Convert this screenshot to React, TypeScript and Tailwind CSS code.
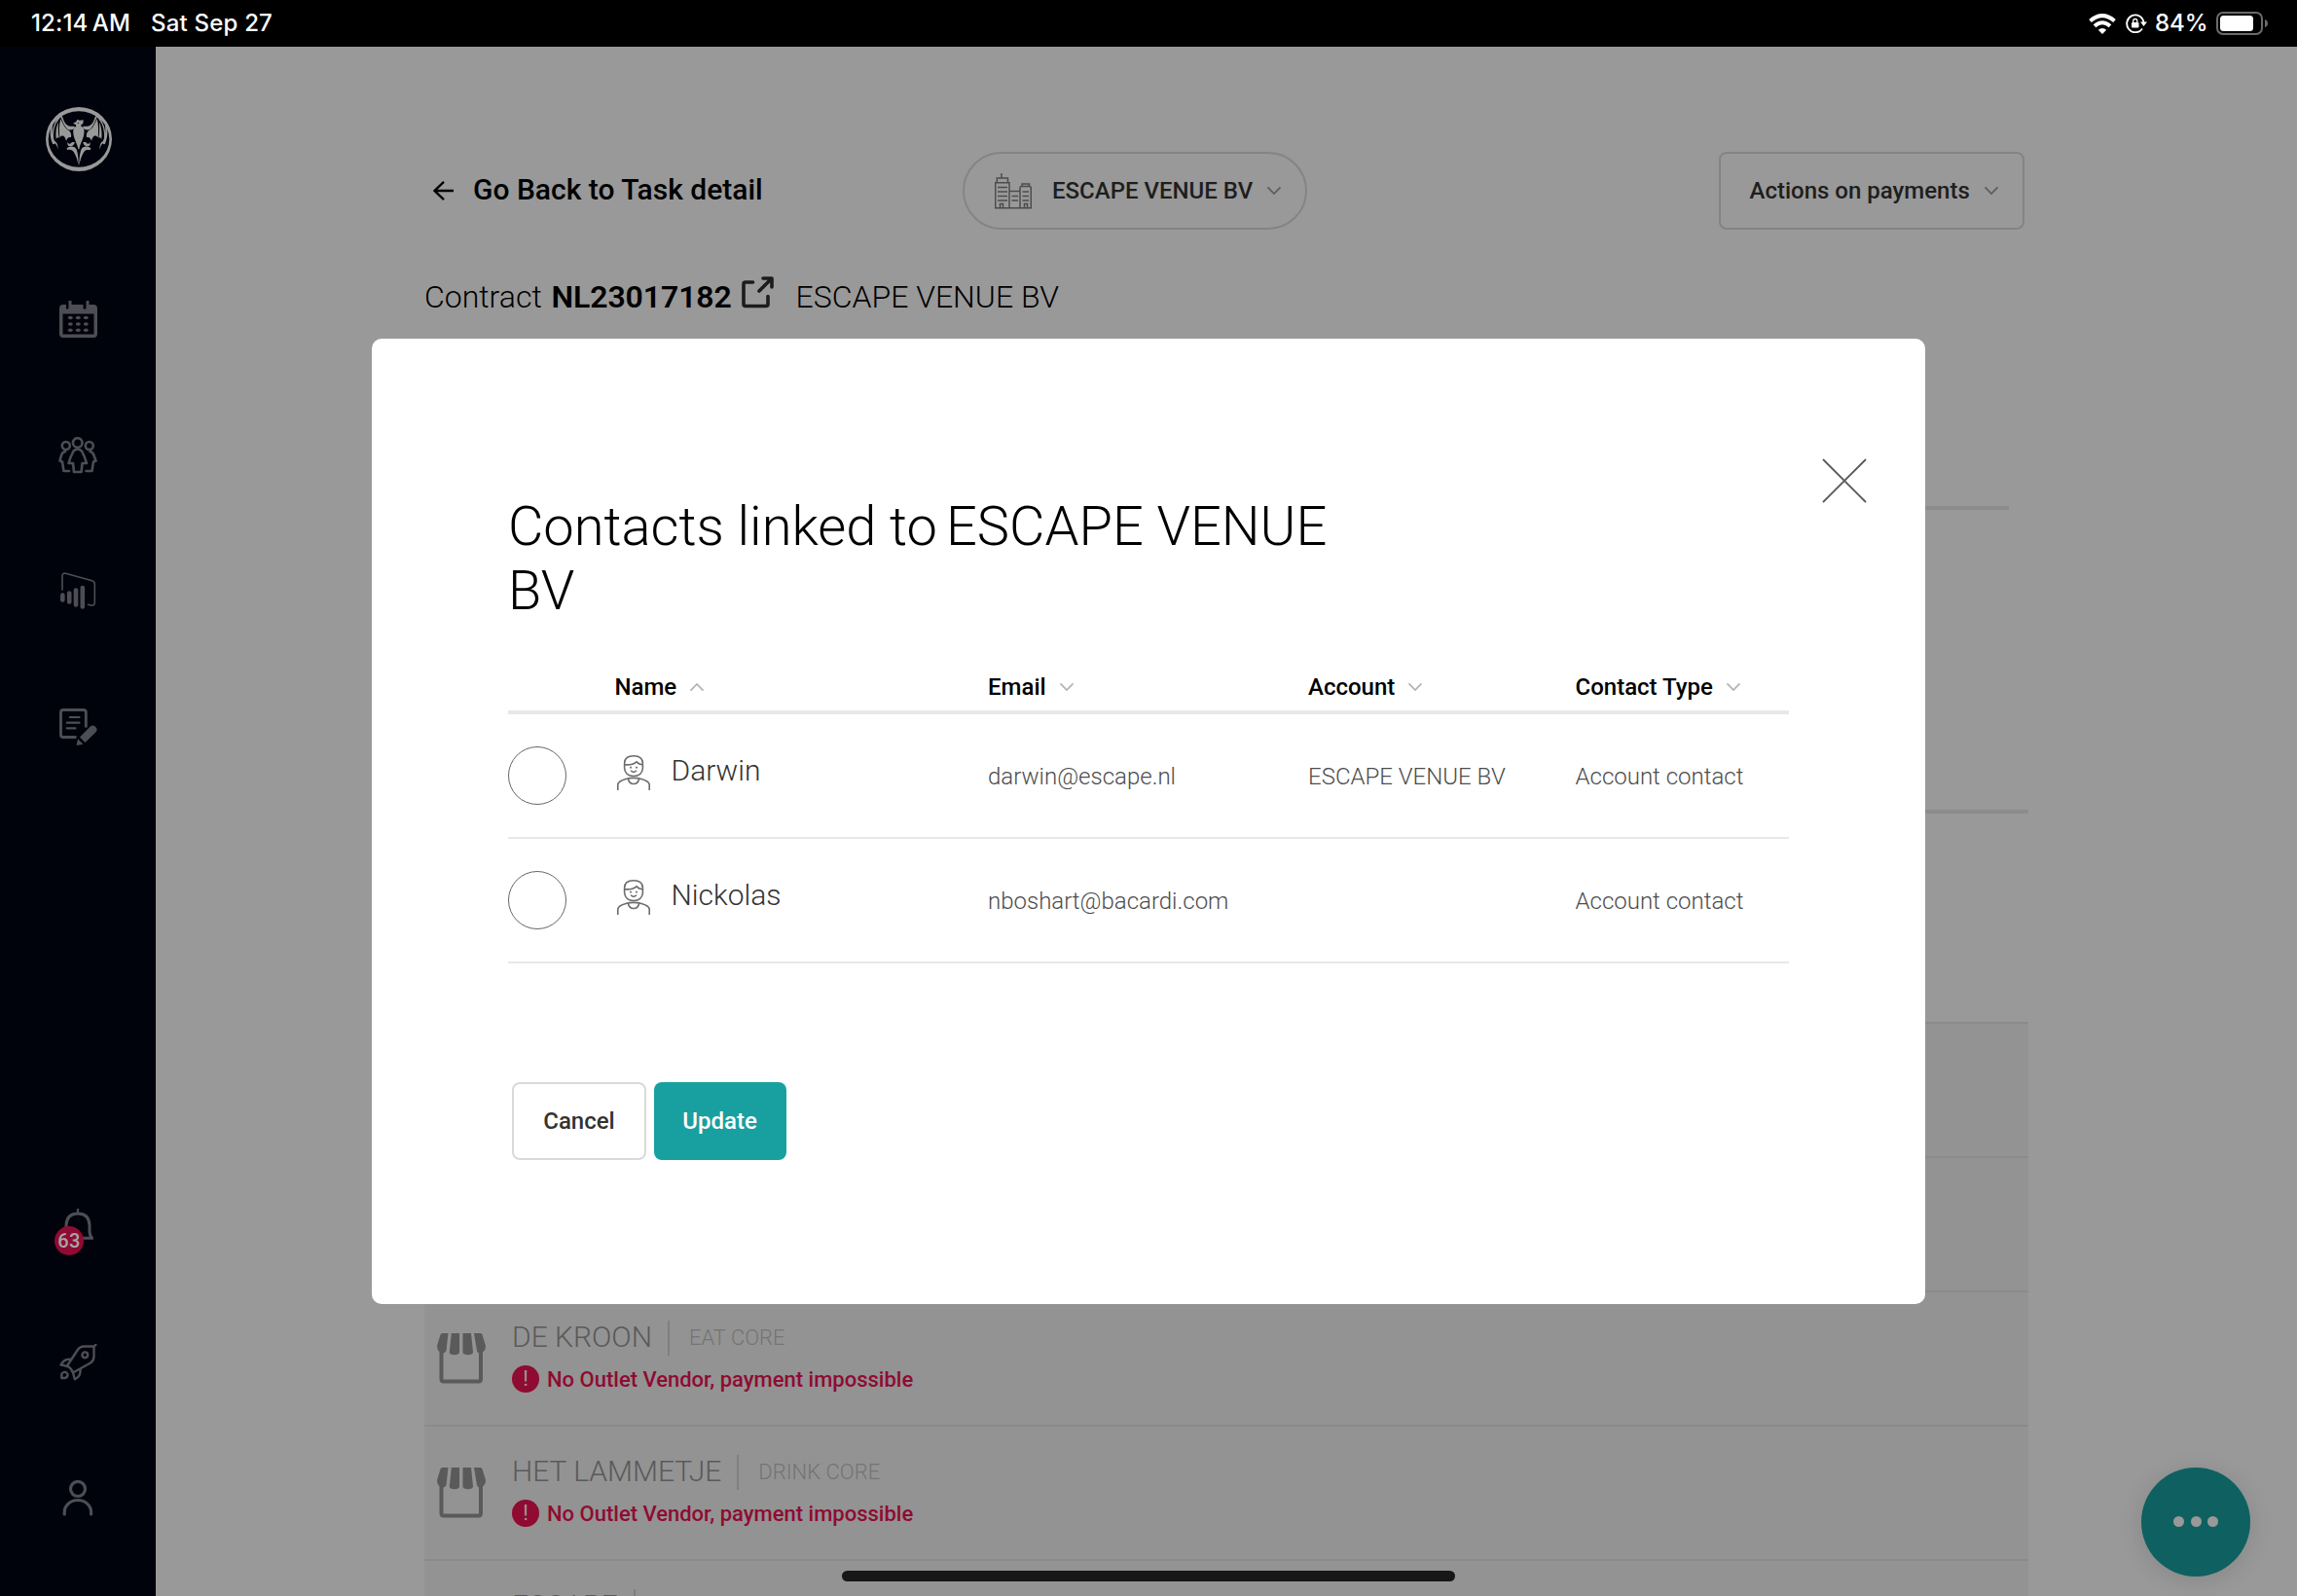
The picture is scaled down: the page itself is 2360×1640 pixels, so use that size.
import React from "react";

type IconProps = { className?: string };

function BatLogo() {
  const wing = (
    <>
      <path d="M184 356 C190 352 193 360 196 370 C203 388 212 391 229 389 L231 394 C224 402 216 402 208 398 C199 391 194 376 187 361 C180 370 171 380 167 398 C164 412 164 424 167 434 L164 436 C160 422 161 404 165 390 C170 375 177 365 184 356 Z" />
      <path d="M187 366 C182 384 182 404 184 424 C192 414 200 418 204 434 C208 424 214 422 219 424 C221 414 218 406 212 402 C200 396 194 382 187 366 Z" />
      <path d="M180 376 C173 392 171 408 173 430 C176 422 180 423 182 426 C179 408 179 392 180 376 Z" />
      <path d="M160 384 C153 398 153 420 161 440 C163 446 167 446 169 442 C175 446 177 454 178 461 C180 448 175 438 169 436 C164 430 159 410 162 386 Z" />
      <path d="M209 438 C212 446 217 444 222 438 L230 438 C230 446 224 452 214 451 C208 449 207 444 209 438 Z" />
      <path d="M206 457 C216 449 231 450 236 461 C240 472 242 488 242 511 C239 494 235 480 227 468 C221 459 214 463 207 461 Z" />
    </>
  );
  return (
    <svg viewBox="141 330 204 198" className="h-[66px] w-[68px]" fill="#999999">
      <path
        fillRule="evenodd"
        d="M141 429 a102 99 0 1 0 204 0 a102 99 0 1 0 -204 0 Z M149 429 a94 86 0 1 0 188 0 a94 86 0 1 0 -188 0 Z"
      />
      {wing}
      <g transform="translate(486 0) scale(-1 1)">{wing}</g>
      <path d="M225 380 L235 375 L238 368 L245 371 L257 370 L256 381 L250 385 L250 389 C258 392 261 400 259 412 C257 430 248 440 244 460 L241 460 C238 442 228 430 226 412 C224 400 228 392 235 389 L234 385 Z" />
      <circle cx="241" cy="379" r="2" fill="#00020c" />
    </svg>
  );
}

function CalendarIcon() {
  return (
    <svg viewBox="0 0 39 38" className="h-[38px] w-[39px]" fill="#4d4e55">
      <path
        fillRule="evenodd"
        d="M4 4 H7 V8 Q8 9.500 9.500 8 V0 H12.500 V4 H24.500 V8 Q26 9.500 27.500 8 V0 H30.500 V4 H35 Q39 4 39 8 V34 Q39 38 35 38 H4 Q0 38 0 34 V8 Q0 4 4 4 Z M3.500 13.500 V34.500 H35.500 V13.500 Z"
      />
      {[17.5, 24, 30.2].map((y) =>
        [11.3, 19.3, 27.3].map((x) => <ellipse key={`${x}-${y}`} cx={x} cy={y} rx="2.500" ry="1.800" />)
      )}
    </svg>
  );
}

function PeopleIcon() {
  return (
    <svg viewBox="0 0 40 38" className="h-[38px] w-[40px]" fill="none" stroke="#4d4e55" strokeWidth="2.600" strokeLinejoin="round" strokeLinecap="round">
      <circle cx="19.700" cy="6" r="4.800" />
      <circle cx="7.800" cy="9" r="4" />
      <circle cx="31.800" cy="9" r="4" />
      <path d="M15.500 14.500 Q19.700 10.500 24 14.500 Q27 20 29 27 H24.500 L23.500 36 H16 L15 27 H10.500 Q12.500 20 15.500 14.500 Z" />
      <path d="M7 15 Q4 15.500 3 19 L1.500 24.500 L4 25.500 L5.500 35 H11" />
      <path d="M32.500 15 Q35.500 15.500 36.500 19 L38.500 24.500 L36 25.500 L34.500 35 H28.500" />
    </svg>
  );
}

function ReportIcon() {
  return (
    <svg viewBox="0 0 37 38" className="h-[38px] w-[37px]" fill="none" stroke="#4d4e55" strokeLinecap="round">
      <path strokeWidth="1.600" d="M2 18 V4 Q2 0.500 5.500 1.300 L32 8.500 Q35.300 9.500 35.300 12 V31 Q35.300 34.800 31.500 34 L28.500 33.200" />
      <path strokeWidth="4.600" d="M2.300 23.500 V28.500 M9.200 21.500 V30.500 M16 18.500 V33.500 M22.800 16 V35.500" />
    </svg>
  );
}

function NoteIcon() {
  return (
    <svg viewBox="0 0 39 38" className="h-[38px] w-[39px]" fill="none" stroke="#4d4e55" strokeLinecap="round">
      <path strokeWidth="2.900" strokeLinecap="butt" d="M27.300 19.500 V4 Q27.300 1.500 24.800 1.500 H4 Q1.500 1.500 1.500 4 V27 Q1.500 29.500 4 29.500 H17.500" />
      <path strokeWidth="2.200" d="M10.800 9 H20.500 M7.800 14.700 H20.500 M7.800 20.300 H16.500" />
      <path stroke="none" fill="#4d4e55" d="M21 29.500 L31.500 18.800 Q34 16.300 37 18.800 Q40 21.500 37.500 24.200 L26.500 35 Z M19 31.300 L24.500 36.800 L17.500 38 Z" />
    </svg>
  );
}

function BellIcon() {
  return (
    <svg viewBox="0 0 40 48" className="h-[48px] w-[40px]" fill="none" stroke="#4d4e55" strokeWidth="3">
      <path d="M24 0 V5" strokeWidth="2.200" />
      <path d="M12 26 V17 Q12.500 5 24 5 Q35.500 5 36 17 V24 Q36.300 27.500 38.500 30.300 H8" />
    </svg>
  );
}

function RocketIcon() {
  return (
    <svg viewBox="0 0 39 38" className="h-[38px] w-[39px]" fill="none" stroke="#4d4e55" strokeWidth="2.400" strokeLinejoin="round" strokeLinecap="round">
      <path d="M8 22.500 L18.500 6.500 Q21 2.500 25.500 2.500 H35.500 V13 Q35.500 17 32 19.500 L14 29.500 Q12.500 25 8 22.500 Z" />
      <path d="M35 3 L37.500 0.800" strokeWidth="2.200" />
      <circle cx="26.300" cy="11.300" r="2.900" />
      <path d="M12 16 Q5.500 14.500 1.500 21.500 Q5 22 8 23" />
      <path d="M14 29.500 L15.800 36.300 Q22.500 33 21.500 26" />
      <path d="M2.300 35 V31 Q3.500 28.500 6.500 29 Q9 30.500 8.500 32.500 Q7.500 35 5.500 35 Z" />
    </svg>
  );
}

function UserIcon() {
  return (
    <svg viewBox="0 0 32 37" className="h-[37px] w-[32px]" fill="none" stroke="#4d4e55" strokeWidth="3.200" strokeLinecap="round">
      <circle cx="16" cy="9" r="7.500" />
      <path d="M2.200 35 V33 A13.700 12.500 0 0 1 29.600 33 V35" />
    </svg>
  );
}

function Chevron({ className = "" }: IconProps) {
  return (
    <svg viewBox="0 0 16 10" className={`h-[10px] w-[16px] shrink-0 ${className}`} fill="none" stroke="currentColor" strokeWidth="1.700">
      <path d="M1.500 1.300 L8 8 L14.500 1.300" />
    </svg>
  );
}

function BuildingsIcon() {
  return (
    <svg viewBox="0 0 38 37" className="h-[37px] w-[38px] shrink-0" fill="none" stroke="#4c4c4c" strokeWidth="1.500">
      <path d="M7 0 V5 M2.300 9 V5 H13.500 V9 M0.700 35.500 V9.800 H15 V35.500 M0 35.700 H38 M15 18.500 H26 M26 35.500 V15 Q26 13.500 27.500 13.500 H35.500 Q37.300 13.500 37.300 15 V35.500 M28 13.500 V11 H35.500 V13.500" />
      <path d="M3 14.500 H13 M3 19 H13 M3 23.500 H13 M3 28 H13 M17.500 23.500 H24 M17.500 28 H24 M28.500 19 H35 M28.500 23.500 H35 M28.500 28 H35 M5.500 35.500 V31.500 H8.500 V35.500 M30.500 35.500 V31.500 H33.500 V35.500" />
    </svg>
  );
}

function ExternalIcon() {
  return (
    <svg viewBox="0 0 33 33" className="h-[33px] w-[33px] shrink-0" fill="none" stroke="#1c1c1c" strokeWidth="3.600" strokeLinejoin="round" strokeLinecap="round">
      <path d="M11.500 6 H4 Q2 6 2 8 V28.500 Q2 30.500 4 30.500 H25 Q27 30.500 27 28.500 V20.500" />
      <path d="M18 15 L30.500 2.500 M22 2 H31 V11" />
    </svg>
  );
}

function ContactIcon() {
  return (
    <svg viewBox="0 0 34 36" className="h-[36px] w-[34px] shrink-0" fill="none" stroke="#6c6c6c" strokeWidth="1.600">
      <path d="M7.600 8.500 Q7.600 0.800 17 0.800 Q26.400 0.800 26.400 8.500 V13.500 Q25.500 21.500 17 21.500 Q8.500 21.500 7.600 13.500 Z" />
      <path d="M7.600 9.700 Q15.500 10.500 20 6.800 Q22.500 9.700 26.400 9.700" />
      <path d="M0.800 36 V30 Q1.500 26.500 9 24.500 Q17 22.300 25 24.500 Q32.500 26.500 33.200 30 V36" />
      <path d="M11.300 24.200 Q12.500 29.500 17 29.500 Q21.500 29.500 22.700 24.200" />
      <path d="M14 15.800 Q17 18.800 20 15.800" />
      <path d="M14 11.700 V13.600 M20 11.700 V13.600" strokeWidth="1.800" />
    </svg>
  );
}

function StoreIcon() {
  return (
    <svg viewBox="0 0 50 52" className="h-[52px] w-[50px] shrink-0" fill="#5a5a5a">
      <path d="M3.500 1.500 Q4 0 5.500 0 H11.500 L9.500 18 Q8.500 20.500 5.500 20.500 Q0 19 0 13 Z" />
      <path d="M14.800 0 H23 V19.500 Q22.500 22.300 18 22.300 Q13 22.300 12.800 19.500 Z" />
      <path d="M26.500 0 H35 L37 19.500 Q36.500 22.300 31.800 22.300 Q27 22.300 26.500 19.500 Z" />
      <path d="M38 0 H44.500 Q46 0 46.500 1.500 L50 13 Q50 19 44.500 20.500 Q41.500 20.500 41 18 Z" />
      <path d="M4.500 18 V47 Q4.500 49.500 7 49.500 H42.500 Q45 49.500 45 47 V18" fill="none" stroke="#5a5a5a" strokeWidth="4" />
    </svg>
  );
}

function StatusBar() {
  return (
    <div className="flex h-[48px] shrink-0 items-center justify-between bg-black pr-[29px] pl-[32px] font-['Inter'] text-[24px] font-medium text-white">
      <div className="flex items-center gap-[22px] leading-[48px] whitespace-nowrap">
        <span className="w-[101px] tracking-[0.150px]">12:14&#8201;AM</span>
        <span className="tracking-[0.200px]">Sat Sep 27</span>
      </div>
      <div className="flex items-center leading-[48px]">
        <svg viewBox="0 0 28 21" className="mr-[10px] h-[21px] w-[28px]" fill="none" stroke="white" strokeWidth="4">
          <path d="M1.500 7.500 Q14 -3.300 26.500 7.500" />
          <path d="M6 12.700 Q14 5.800 22 12.700" />
          <path d="M14 21 L9.800 16.800 Q14 13 18.200 16.800 Z" fill="white" stroke="none" />
        </svg>
        <svg viewBox="0 0 22 20" className="mr-[8px] h-[20px] w-[22px]" fill="none" stroke="white" strokeWidth="1.900">
          <path d="M17 15.500 A8.700 8.900 0 1 1 18.500 9" />
          <path d="M15 8.500 H22 L18.500 13 Z" fill="white" stroke="none" />
          <rect x="6" y="9" width="7.500" height="5.500" rx="1" fill="white" stroke="none" />
          <path d="M7.700 9 V7.500 Q7.700 5.500 9.750 5.500 Q11.800 5.500 11.800 7.500 V9" strokeWidth="1.300" />
        </svg>
        <span className="w-[63px] whitespace-nowrap">84%</span>
        <svg viewBox="0 0 54 24" className="h-[24px] w-[54px]">
          <rect x="1" y="1" width="46" height="22" rx="6" fill="none" stroke="#6b6b6b" strokeWidth="2" />
          <rect x="4" y="4" width="34" height="16" rx="3.500" fill="white" />
          <path d="M50 8 Q53 9 53 12 Q53 15 50 16 Z" fill="#6b6b6b" />
        </svg>
      </div>
    </div>
  );
}

function Sidebar() {
  return (
    <nav className="flex w-[160px] shrink-0 flex-col items-center bg-[#00020c]">
      <div className="mt-[62px] ml-[2px] h-[66px]"><BatLogo /></div>
      <div className="mt-[133px] h-[38px]"><CalendarIcon /></div>
      <div className="mt-[102px] h-[38px]"><PeopleIcon /></div>
      <div className="mt-[101px] h-[38px]"><ReportIcon /></div>
      <div className="mt-[102px] h-[38px]"><NoteIcon /></div>
      <div className="relative mt-[476px] -ml-[8px] h-[48px]">
        <BellIcon />
        <span className="absolute top-[18px] left-0 flex h-[30px] w-[30px] items-center justify-center rounded-full bg-[#8f0b32] text-[20px] font-medium tracking-[0.300px] text-[#a9a3a5]">63</span>
      </div>
      <div className="mt-[91px] h-[38px]"><RocketIcon /></div>
      <div className="mt-[102px] h-[37px]"><UserIcon /></div>
    </nav>
  );
}

function OutletRow({ name, segment }: { name?: string; segment?: string }) {
  return (
    <div className="flex h-[138px] shrink-0 border-b-2 border-[#8b8b8b] pl-[13px]">
      {name && (
        <>
          <div className="mt-[42px] h-[52px]"><StoreIcon /></div>
          <div className="mt-[29px] ml-[27px] flex flex-col">
            <div className="flex h-[36px] items-center whitespace-nowrap">
              <span className="-mt-[2px] text-[30px] leading-[36px] font-light text-[#5a5a5a]">{name}</span>
              <span className="mr-[20px] ml-[16px] h-[36px] w-[2px] bg-[#7f7f7f]" />
              <span className="text-[22px] leading-[34px] font-light text-[#747474]">{segment}</span>
            </div>
            <div className="mt-[10px] flex h-[28px] items-center gap-[8px]">
              <span className="flex h-[28px] w-[28px] items-center justify-center rounded-full bg-[#8f0b32] text-[22px] leading-[28px] text-[#999999]">!</span>
              <span className="mt-[2px] text-[22px] leading-[28px] font-medium whitespace-nowrap text-[#8f0b32]">No Outlet Vendor, payment impossible</span>
            </div>
          </div>
        </>
      )}
    </div>
  );
}

function Page() {
  return (
    <main className="flex min-w-0 flex-1 flex-col bg-[#999999] pl-[276px]">
      <div className="mt-[108px] flex h-[80px] w-[1644px] shrink-0 items-center">
        <div className="flex w-[553px] items-center pl-[9px]">
          <svg viewBox="0 0 22 20" className="h-[20px] w-[22px] shrink-0" fill="none" stroke="black" strokeWidth="2.300">
            <path d="M21 10 H1.500 M11 0.800 L1.500 10 L11 19.200" />
          </svg>
          <span className="-mt-[2px] ml-[19px] text-[30px] leading-[36px] font-medium whitespace-nowrap text-black">Go Back to Task detail</span>
        </div>
        <div className="flex h-[80px] w-[354px] items-center rounded-full border-2 border-[#848484] pl-[31px]">
          <BuildingsIcon />
          <span className="ml-[21px] w-[220px] text-[24px] font-medium whitespace-nowrap text-[#1e1e1e]">ESCAPE VENUE BV</span>
          <Chevron className="text-[#5c5c5c]" />
        </div>
        <div className="ml-auto flex h-[80px] w-[314px] items-center rounded-[8px] border-2 border-[#848484] pl-[29.500px]">
          <span className="w-[240.500px] text-[24px] font-medium whitespace-nowrap text-[#1e1e1e]">Actions on payments</span>
          <Chevron className="text-[#5c5c5c]" />
        </div>
      </div>
      <div className="mt-[49px] flex h-[40px] shrink-0 items-start text-[32px] leading-[40px] whitespace-nowrap text-black">
        <span className="w-[130.500px] font-light">Contract</span>
        <span className="w-[195.500px] font-semibold tracking-[-0.100px]">NL23017182</span>
        <div className="-mt-[1px] w-[55.500px]"><ExternalIcon /></div>
        <span className="font-light">ESCAPE VENUE BV</span>
      </div>
      <div className="mt-[195px] h-[4px] w-[1628px] shrink-0 bg-[#8c8c8c]" />
      <div className="mt-[308px] h-[4px] w-[1648px] shrink-0 bg-[#8c8c8c]" />
      <div className="mt-[214px] flex h-[590px] w-[1648px] flex-col overflow-hidden border-t-2 border-[#8b8b8b] bg-[#939393]">
        <OutletRow />
        <OutletRow />
        <OutletRow name="DE KROON" segment="EAT CORE" />
        <OutletRow name="HET LAMMETJE" segment="DRINK CORE" />
        <OutletRow name="ESCAPE" />
      </div>
    </main>
  );
}

const COLUMNS = "grid grid-cols-[109.500px_383.500px_329px_274.500px_219.500px]";

const contacts = [
  { name: "Darwin", email: "darwin@escape.nl", account: "ESCAPE VENUE BV", type: "Account contact" },
  { name: "Nickolas", email: "nboshart@bacardi.com", account: "", type: "Account contact" },
];

function HeaderCell({ label, up }: { label: string; up?: boolean }) {
  return (
    <div className="flex h-[28px] items-center">
      <span className="mr-[13px] text-[24px] leading-[28px] font-medium text-black">{label}</span>
      <Chevron className={up ? "rotate-180 text-[#b3b3b3]" : "text-[#b3b3b3]"} />
    </div>
  );
}

function ContactsDialog() {
  return (
    <section className="absolute top-[348px] left-[382px] flex h-[992px] w-[1596px] flex-col rounded-[10px] bg-white pl-[140px]">
      <button className="absolute top-[122px] left-[1489px]">
        <svg viewBox="0 0 48 48" className="h-[48px] w-[48px]" stroke="#5a5a5a" strokeWidth="1.800" strokeLinecap="round">
          <path d="M2.500 2.500 L45.500 45.500 M45.500 2.500 L2.500 45.500" />
        </svg>
      </button>
      <h1 className="mt-[160px] flex h-[132px] flex-col text-[56px] leading-[66px] font-light whitespace-nowrap text-black">
        <span className="flex"><span className="w-[450px]">Contacts linked to</span><span>ESCAPE VENUE</span></span>
        <span>BV</span>
      </h1>
      <div className="mt-[52px] w-[1316px]">
        <div className={`${COLUMNS} h-[42px] border-b-4 border-[#e8e8e8]`}>
          <span />
          <HeaderCell label="Name" up />
          <HeaderCell label="Email" />
          <HeaderCell label="Account" />
          <HeaderCell label="Contact Type" />
        </div>
        {contacts.map((c) => (
          <div key={c.name} className={`${COLUMNS} h-[128px] items-center border-b-2 border-[#e8e8e8] text-[24px] font-light whitespace-nowrap text-[#4d4d4d]`}>
            <span className="h-[60px] w-[60px] rounded-full border border-[#666666]" />
            <span className="flex items-center gap-[20px] pl-[2.500px]">
              <span className="-mt-[7px]"><ContactIcon /></span>
              <span className="-mt-[12px] ml-[1.500px] text-[30px] text-[#333333]">{c.name}</span>
            </span>
            <span className="mt-[2px]">{c.email}</span>
            <span className="mt-[2px]">{c.account}</span>
            <span className="mt-[2px]">{c.type}</span>
          </div>
        ))}
      </div>
      <div className="mt-[122px] ml-[4px] flex gap-[8px] text-[24px] font-medium">
        <button className="h-[80px] w-[138px] rounded-[8px] border-2 border-[#d9d9d9] text-[#333333]">Cancel</button>
        <button className="h-[80px] w-[136px] rounded-[8px] bg-[#18a0a0] pr-[1px] text-white">Update</button>
      </div>
    </section>
  );
}

export default function App() {
  return (
    <div className="relative flex h-[1640px] w-[2360px] flex-col overflow-hidden font-['Roboto',sans-serif]">
      <StatusBar />
      <div className="flex min-h-0 flex-1">
        <Sidebar />
        <Page />
      </div>
      <button className="absolute top-[1508px] left-[2200px] flex h-[112px] w-[112px] items-center justify-center gap-[6.500px] rounded-full bg-[#0f6060] pb-[1px] shadow-[0_4px_24px_rgba(0,0,0,0.120)]">
        <span className="h-[11px] w-[11px] rounded-full bg-[#999999]" />
        <span className="h-[11px] w-[11px] rounded-full bg-[#999999]" />
        <span className="h-[11px] w-[11px] rounded-full bg-[#999999]" />
      </button>
      <ContactsDialog />
      <div className="absolute top-[1614px] left-[865px] h-[11px] w-[630px] rounded-full bg-[#171717]" />
    </div>
  );
}
